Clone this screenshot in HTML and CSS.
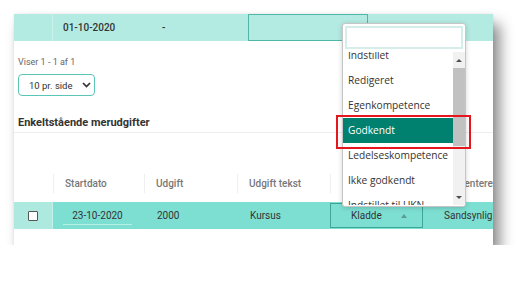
FILE: index.html
```html
<!DOCTYPE html>
<html lang="da">
<head>
  <meta charset="UTF-8">
  <title>Merudgifter</title>
  <link rel="stylesheet" href="styles.css">
</head>
<body>
  <div class="panel">
    <div class="top-row">
      <div class="cell first"></div>
      <div class="cell date-bold">01-10-2020</div>
      <div class="cell dash">-</div>
      <div class="cell"><div class="top-box"></div></div>
    </div>

    <div class="pager">
      <div class="count">Viser 1 - 1 af 1</div>
      <div class="page-size">
        <span>10 pr. side</span>
        <svg width="9" height="6" viewBox="0 0 9 6"><path d="M1 1 L4.5 4.5 L8 1" fill="none" stroke="#333" stroke-width="1.7"/></svg>
      </div>
    </div>

    <h2 class="section-title">Enkeltstående merudgifter</h2>

    <div class="grid head">
      <div class="hcell blank"></div>
      <div class="hcell">Startdato</div>
      <div class="hcell">Udgift</div>
      <div class="hcell">Udgift tekst</div>
      <div class="hcell"></div>
      <div class="hcell plain">Præsenteret</div>
    </div>

    <div class="grid data">
      <div class="dcell check-cell"><span class="checkbox"></span></div>
      <div class="dcell"><span class="date-input">23-10-2020</span></div>
      <div class="dcell pad">2000</div>
      <div class="dcell pad">Kursus</div>
      <div class="dcell"><div class="status-box"><span>Kladde</span><i class="caret"></i></div></div>
      <div class="dcell pad last">Sandsynlig</div>
    </div>

    <div class="dropdown">
      <div class="search"></div>
      <div class="list-wrap">
        <ul class="options">
          <li>Indstillet</li>
          <li>Redigeret</li>
          <li>Egenkompetence</li>
          <li class="active">Godkendt</li>
          <li>Ledelseskompetence</li>
          <li>Ikke godkendt</li>
          <li>Indstillet til UKN</li>
        </ul>
        <div class="scrollbar">
          <div class="arrow up"></div>
          <div class="thumb"></div>
          <div class="arrow down"></div>
        </div>
      </div>
    </div>
  </div>
  <div class="marker"></div>
</body>
</html>
```

FILE: styles.css
```css
body {
  margin: 0;
  background: #fff;
  font-family: Roboto, "Liberation Sans", sans-serif;
  color: #333;
}
.panel {
  position: relative;
  margin: 14px 0 0 14px;
  width: 479px;
  height: 231px;
  background: #fff;
  box-shadow: 7px 10px 13px rgba(0,0,0,0.45), 0 0 3px rgba(0,0,0,0.08);
}
.top-row {
  display: grid;
  grid-template-columns: 39px 91px 93px 1fr;
  height: 27px;
  background: #b3ebe2;
  font-size: 10px;
  font-weight: 500;
}
.top-row .cell {
  display: flex;
  align-items: center;
}
.top-row .first {
  border-right: 1px solid #c9f1ea;
}
.date-bold {
  padding-left: 10px;
}
.dash {
  padding-left: 18px;
}
.top-box {
  margin-left: 11px;
  width: 118px;
  height: 25px;
  border: 1px solid #4fb8a8;
}
.pager {
  padding: 15px 4px 0;
}
.count {
  font-size: 9px;
  line-height: 12px;
  color: #666;
}
.page-size {
  margin-top: 6px;
  width: 62px;
  height: 20px;
  border: 1.5px solid #5cc6b6;
  border-radius: 4px;
  display: flex;
  align-items: center;
  justify-content: space-between;
  padding: 0 3px 0 10px;
  font-size: 9.5px;
}
.section-title {
  margin: 19px 0 0;
  padding: 0 4px 1px;
  font-size: 11px;
  line-height: 16px;
  font-weight: 700;
  color: #333;
  border-bottom: 1px solid #eee;
}
.grid {
  display: grid;
  grid-template-columns: 39px 91px 93px 93px 93px 1fr;
}
.head {
  margin-top: 41px;
  height: 19px;
  font-size: 10px;
  font-weight: 500;
  color: #777;
}
.hcell {
  border-left: 1px solid #eee;
  padding-left: 11px;
  display: flex;
  align-items: center;
  white-space: nowrap;
  overflow: hidden;
}
.hcell.blank {
  border-left: none;
}
.hcell.plain {
  border-left: none;
  padding-left: 18px;
}
.data {
  margin-top: 9px;
  height: 27px;
  background: #7ddfd2;
  font-size: 10px;
}
.dcell {
  display: flex;
  align-items: center;
  white-space: nowrap;
  overflow: hidden;
}
.dcell.pad {
  padding-left: 13px;
}
.dcell.last {
  padding-left: 21px;
}
.check-cell {
  background: #aee9e0;
  border-right: 1px solid #c4f0e9;
  justify-content: center;
}
.checkbox {
  width: 8px;
  height: 8px;
  border: 1.5px solid #555;
  border-radius: 1px;
  background: #fff;
}
.date-input {
  margin-left: 10px;
  width: 69px;
  text-align: center;
  padding: 4px 0 3px;
  border-bottom: 1px solid #b8efe7;
}
.status-box {
  display: flex;
  align-items: center;
  padding-left: 20px;
  box-sizing: border-box;
  width: 93px;
  height: 25px;
  border: 1px solid #3da695;
}
.caret {
  margin-left: 19px;
  width: 0;
  height: 0;
  border-left: 3px solid transparent;
  border-right: 3px solid transparent;
  border-bottom: 4px solid #5a9c92;
}
.dropdown {
  position: absolute;
  left: 328px;
  top: 9px;
  width: 124px;
  height: 184px;
  box-sizing: border-box;
  border: 1px solid #c6c6c6;
  border-radius: 3px;
  background: #fff;
  box-shadow: 0 1px 5px rgba(0,0,0,0.18);
  font-family: "Open Sans", "Noto Sans", sans-serif;
}
.search {
  margin: 2px 2px 0;
  height: 23px;
  box-sizing: border-box;
  border: 2px solid #d5eeea;
}
.list-wrap {
  position: relative;
  margin-top: 3px;
  height: 153px;
  overflow: hidden;
}
.options {
  list-style: none;
  margin: -9px 12px 0 0;
  padding: 0;
}
.options li {
  height: 25px;
  line-height: 25px;
  padding-left: 5px;
  font-size: 10.2px;
  color: #333;
  white-space: nowrap;
}
.options li.active {
  background: #00806e;
  color: #fff;
}
.scrollbar {
  position: absolute;
  right: 0;
  top: 0;
  width: 12px;
  height: 100%;
  background: #f1f1f1;
  display: flex;
  flex-direction: column;
}
.arrow {
  height: 16px;
  display: flex;
  align-items: center;
  justify-content: center;
}
.arrow::after {
  content: "";
  border-left: 3px solid transparent;
  border-right: 3px solid transparent;
}
.arrow.up::after {
  border-bottom: 3px solid #505050;
}
.arrow.down {
  margin-top: auto;
}
.arrow.down::after {
  border-top: 3px solid #505050;
}
.thumb {
  height: 78px;
  background: #c1c1c1;
}
.marker {
  position: absolute;
  left: 336px;
  top: 115px;
  width: 131px;
  height: 30px;
  border: 2px solid #e5161d;
}
```
